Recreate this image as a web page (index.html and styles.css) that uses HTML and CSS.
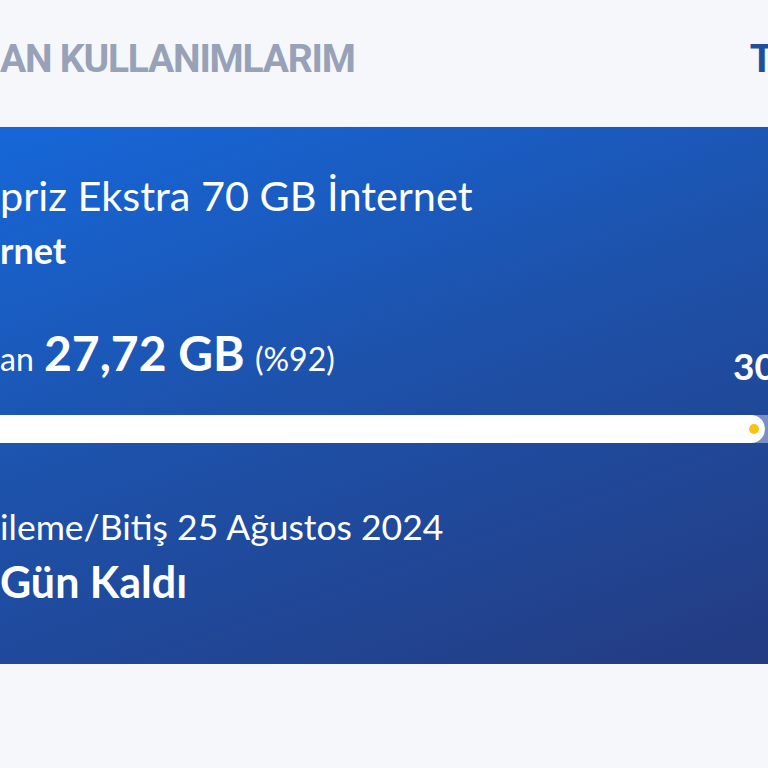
FILE: index.html
```html
<!DOCTYPE html>
<html lang="tr">
<head>
    <meta charset="UTF-8">
    <meta name="viewport" content="width=device-width, initial-scale=1.0">
    <title>Kullanımlarım</title>
    <link rel="stylesheet" href="styles.css">
</head>
<body>
    <header class="section-head">
        <h2 class="section-title">AN KULLANIMLARIM</h2>
        <a class="see-all" href="#">T</a>
    </header>
    <section class="usage-card">
        <h3 class="package-name">priz Ekstra 70 GB İnternet</h3>
        <p class="package-type">rnet</p>
        <div class="usage-row">
            <p class="remaining">an <strong class="amount">27,72 GB</strong> <span class="percent">(%92)</span></p>
            <span class="total">30</span>
        </div>
        <div class="bar">
            <div class="bar-fill" style="width: 99.6%"><span class="bar-dot"></span></div>
        </div>
        <p class="renew">ileme/Bitiş 25 Ağustos 2024</p>
        <p class="days-left">Gün Kaldı</p>
    </section>
</body>
</html>
```

FILE: styles.css
```css
body {
    font-family: Lato, "Noto Sans", sans-serif;
    background-color: #f5f7fa;
    color: #fff;
    margin: 0;
    overflow: hidden;
}

.section-head {
    display: flex;
    justify-content: space-between;
    align-items: center;
    height: 119px;
    margin-bottom: 8px;
}

.section-title {
    font-family: Roboto, sans-serif;
    font-weight: 700;
    font-size: 39px;
    line-height: 1;
    letter-spacing: -1.2px;
    color: #97a1b8;
    margin: 0;
}

.see-all {
    font-family: Roboto, sans-serif;
    font-weight: 700;
    font-size: 39px;
    line-height: 1;
    color: #1f4e9c;
    text-decoration: none;
    margin-right: -6px;
}

.usage-card {
    background: linear-gradient(160deg, #1667d9 0%, #1d52ab 45%, #243b81 100%);
    padding: 48px 0 61px;
    box-shadow: 0 1px 2px rgba(0, 0, 0, 0.25);
}

.package-name {
    font-size: 41.4px;
    font-weight: 400;
    line-height: 1;
    margin: 0;
}

.package-type {
    font-size: 36px;
    font-weight: 700;
    line-height: 1;
    margin: 16px 0 0;
}

.usage-row {
    display: flex;
    justify-content: space-between;
    align-items: flex-end;
    margin-top: 61px;
}

.remaining {
    font-size: 32px;
    line-height: 1;
    margin: 0;
}

.amount {
    font-size: 48px;
    font-weight: 700;
    margin: 0 2px;
}

.percent {
    font-size: 32px;
}

.total {
    font-size: 37px;
    font-weight: 700;
    line-height: 1;
    margin-bottom: -7px;
    margin-right: -8px;
}

.bar {
    height: 28px;
    margin-top: 38px;
    background-color: rgba(255, 255, 255, 0.4);
}

.bar-fill {
    position: relative;
    height: 100%;
    background-color: #fff;
    border-radius: 0 14px 14px 0;
}

.bar-dot {
    position: absolute;
    right: 6px;
    top: 9px;
    width: 10px;
    height: 10px;
    border-radius: 50%;
    background-color: #f7c316;
}

.renew {
    font-size: 35.5px;
    line-height: 1;
    margin: 66px 0 0;
}

.days-left {
    font-size: 43px;
    font-weight: 700;
    line-height: 1;
    margin: 15px 0 0;
}
```
